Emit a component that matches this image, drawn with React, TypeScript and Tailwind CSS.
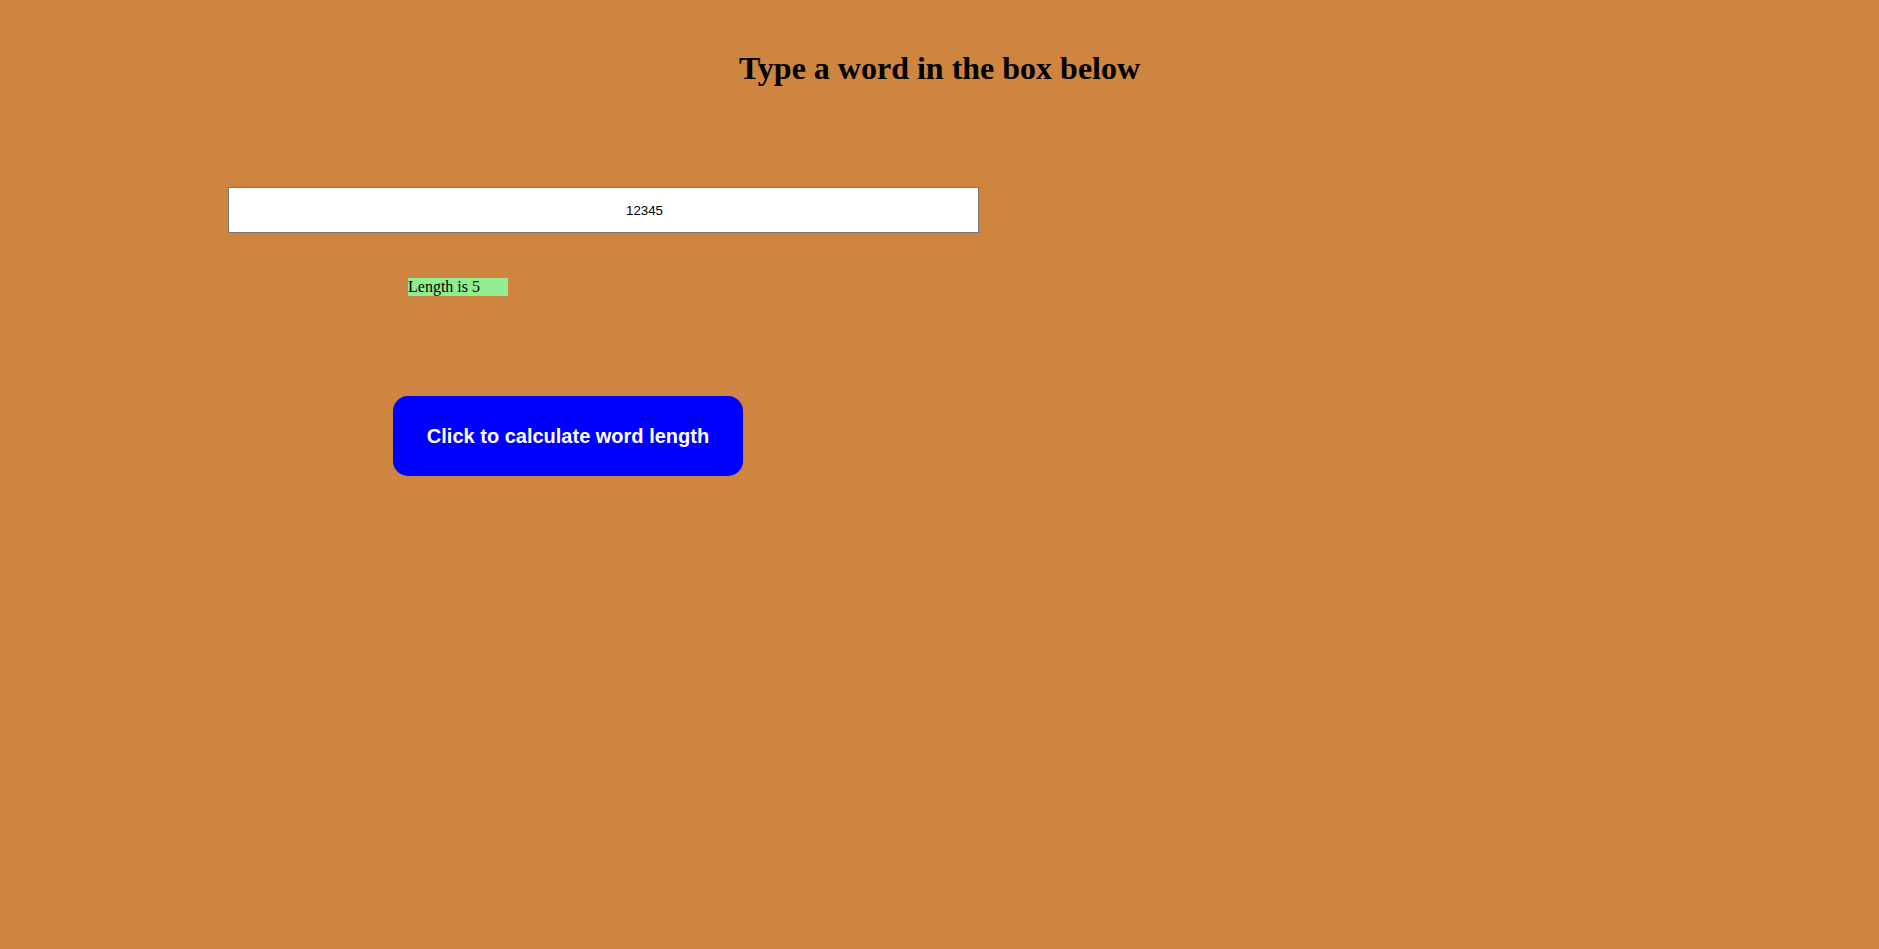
import { useState } from "react";

export default function App() {
  const [word, setWord] = useState("12345");
  const [length, setLength] = useState(5);

  return (
    <div className="flex min-h-screen flex-col items-start bg-[#cd853f] text-black">
      <h1 className="mt-[50px] w-full text-center font-['Liberation_Serif',serif] text-[32px] font-bold leading-[36px]">
        Type a word in the box below
      </h1>

      <input
        type="text"
        value={word}
        onChange={(e) => setWord(e.target.value)}
        className="ml-[228px] mt-[101px] block h-[46px] w-[751px] border border-[#767676] bg-white pl-[82px] pr-0 pt-[1px] text-center font-['Liberation_Sans',Arial,sans-serif] text-[13.33px] text-black outline-none"
      />

      <div className="ml-[408px] mt-[45px] w-[100px] bg-[#90ee90] font-['Liberation_Serif',serif] text-[16px] leading-[18px]">
        Length is {length}
      </div>

      <button
        onClick={() => setLength(word.length)}
        className="ml-[393px] mt-[100px] flex h-[80px] w-[350px] items-center justify-center rounded-[15px] bg-[#0000ff] font-['Liberation_Sans',Arial,sans-serif] text-[20px] font-bold text-white"
      >
        Click to calculate word length
      </button>
    </div>
  );
}
